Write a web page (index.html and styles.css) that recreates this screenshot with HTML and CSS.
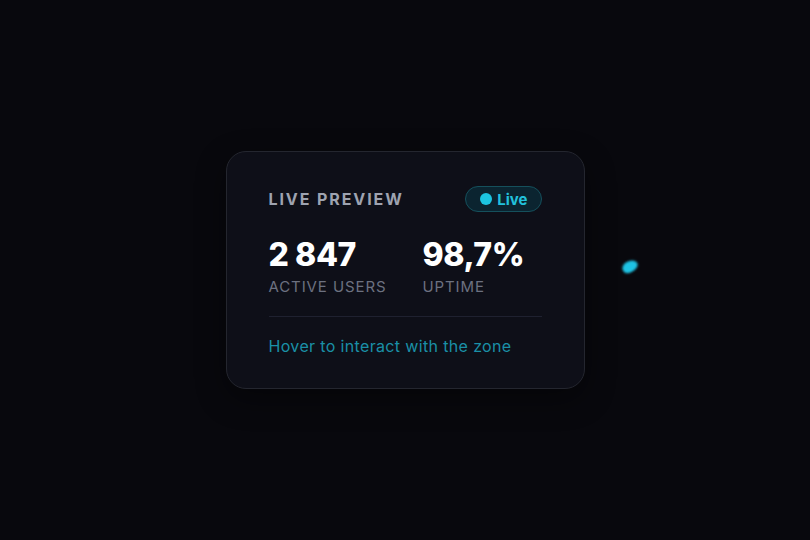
FILE: index.html
```html
<!DOCTYPE html>
<html lang="en">
<head>
  <meta charset="UTF-8">
  <meta name="viewport" content="width=device-width, initial-scale=1.0">
  <title>Live Preview</title>
  <link rel="stylesheet" href="styles.css">
</head>
<body>
  <main class="zone">
    <section class="card">
      <div class="card-head">
        <h2 class="card-title">Live Preview</h2>
        <span class="badge"><span class="badge-dot"></span>Live</span>
      </div>

      <div class="stats">
        <div class="stat">
          <div class="stat-value">2 847</div>
          <div class="stat-label">Active Users</div>
        </div>
        <div class="stat">
          <div class="stat-value">98,7%</div>
          <div class="stat-label">Uptime</div>
        </div>
      </div>

      <p class="card-foot">Hover to interact with the zone</p>
    </section>

    <span class="cursor-glow"></span>
  </main>
</body>
</html>
```

FILE: styles.css
```css
* {
  box-sizing: border-box;
}
html, body {
  margin: 0;
  height: 100%;
}
body {
  background-color: #08080d;
  font-family: Inter, "Noto Sans", sans-serif;
  color: #ffffff;
}
.zone {
  position: relative;
  height: 100%;
  display: flex;
  align-items: center;
  justify-content: center;
}
.card {
  width: 359px;
  padding: 34px 42px 32px;
  background-color: #0e0f18;
  border: 1px solid #24262f;
  border-radius: 20px;
  box-shadow: 0 10px 30px rgba(0, 0, 0, 0.4);
}
.card-head {
  display: flex;
  align-items: center;
  justify-content: space-between;
}
.card-title {
  margin: 0;
  font-size: 16px;
  font-weight: 700;
  letter-spacing: 1.9px;
  text-transform: uppercase;
  color: #9ea3b0;
}
.badge {
  display: inline-flex;
  align-items: center;
  gap: 5px;
  height: 26px;
  padding: 0 13px 0 14px;
  border: 1px solid #15505c;
  border-radius: 13px;
  background-color: #0b2430;
  color: #22c1dc;
  font-size: 15px;
  font-weight: 700;
}
.badge-dot {
  width: 12px;
  height: 12px;
  border-radius: 50%;
  background-color: #1cc4e0;
}
.stats {
  display: flex;
  gap: 36px;
  margin-top: 25px;
}
.stat-value {
  font-size: 32px;
  font-weight: 800;
  letter-spacing: -0.4px;
  line-height: 36px;
}
.stat-label {
  margin-top: 4px;
  font-size: 15px;
  letter-spacing: 0.9px;
  text-transform: uppercase;
  color: #6c7180;
}
.card-foot {
  margin: 20px 0 0;
  padding-top: 19px;
  border-top: 1px solid #1f2130;
  font-size: 16px;
  letter-spacing: 0.35px;
  color: #1a90a7;
}
.cursor-glow {
  position: absolute;
  left: 622px;
  top: 261px;
  width: 16px;
  height: 11px;
  border-radius: 50% 60% 50% 45%;
  background-color: #1ec3e4;
  transform: rotate(-30deg);
  filter: blur(0.8px);
}
```
